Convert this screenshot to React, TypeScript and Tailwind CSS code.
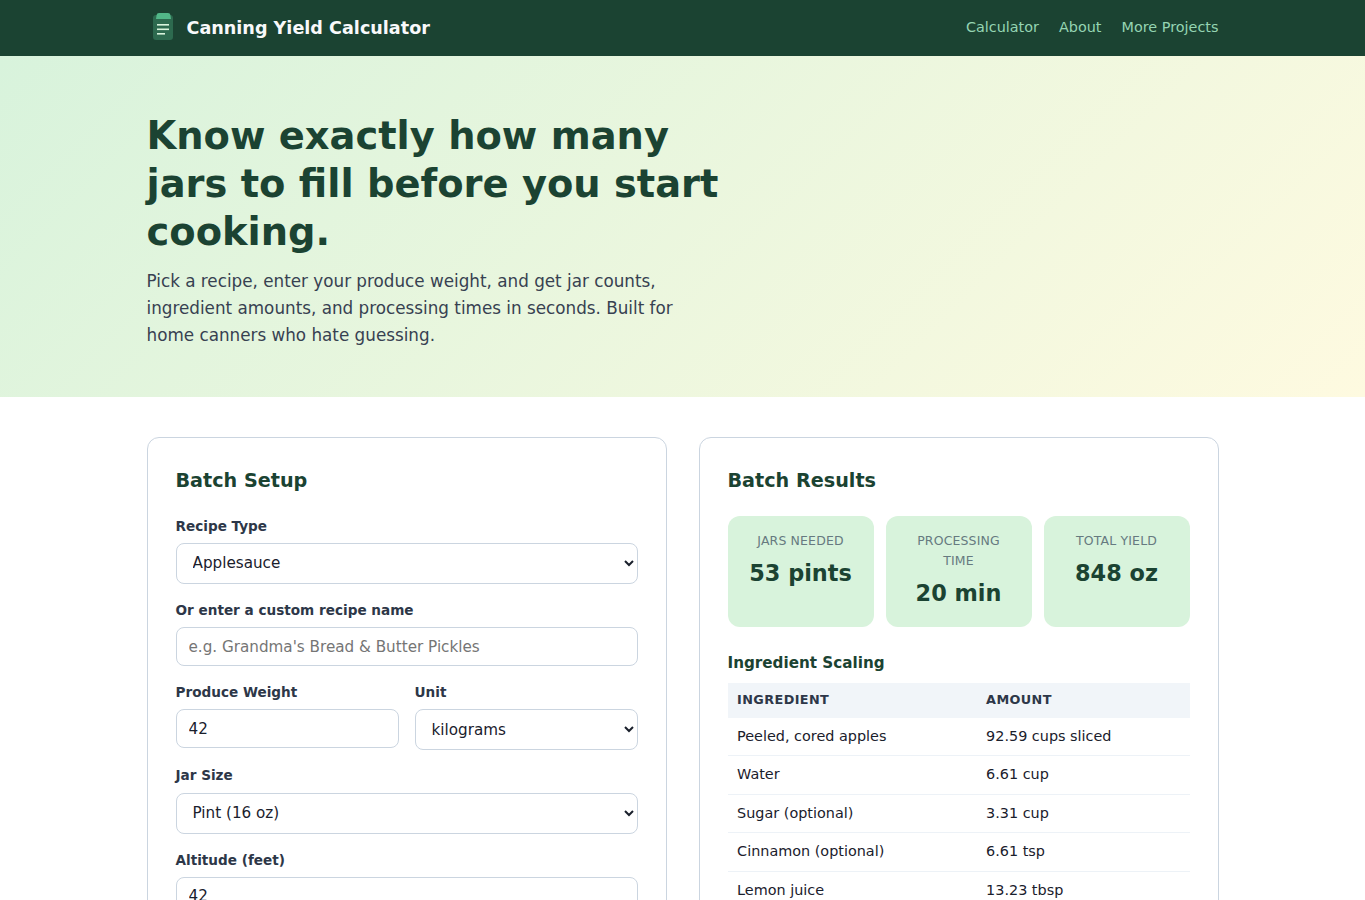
const ingredients = [
  { name: 'Peeled, cored apples', amount: '92.59 cups sliced' },
  { name: 'Water', amount: '6.61 cup' },
  { name: 'Sugar (optional)', amount: '3.31 cup' },
  { name: 'Cinnamon (optional)', amount: '6.61 tsp' },
  { name: 'Lemon juice', amount: '13.23 tbsp' },
];

const stats = [
  { label: 'Jars Needed', value: '53 pints' },
  { label: 'Processing Time', value: '20 min' },
  { label: 'Total Yield', value: '848 oz' },
];

const labelClass = 'block mb-[5.6px] text-[13.6px] font-semibold text-[#2d3748]';
const selectClass = 'w-full py-[9.5px] px-3 border border-[#cbd5e0] rounded-lg bg-white text-[15.2px] leading-normal text-[#1a202c]';
const inputClass = 'w-full py-[9.4px] px-3 border border-[#cbd5e0] rounded-lg bg-white text-[15.2px] leading-[normal] text-[#1a202c] placeholder:text-[#757575]';

function JarIcon() {
  return (
    <svg viewBox="0 0 32 32" width="32" height="32" className="mr-2">
      <rect x="6" y="3" width="20" height="25" rx="3" fill="#2d6a4f" />
      <path d="M9 7 L9.6 3 Q9.8 1 12 1 L21 1 Q23.2 1 23.4 3 L24 7 Z" fill="#52b788" />
      <rect x="10" y="12" width="12" height="1.6" fill="#d8f3dc" />
      <rect x="10" y="16.5" width="12" height="1.6" fill="#d8f3dc" />
      <rect x="10" y="21" width="8" height="1.6" fill="#d8f3dc" />
    </svg>
  );
}

export default function App() {
  return (
    <div className="font-['DejaVu_Sans',sans-serif] leading-[1.6] text-[#1a202c] bg-white">
      {/* Top bar */}
      <nav className="bg-[#1b4332] h-14 flex items-center">
        <div className="w-[1072px] mx-auto flex items-center justify-between">
          <div className="flex items-center">
            <JarIcon />
            <span className="text-[17.6px] font-bold text-[#f8f9fa]">Canning Yield Calculator</span>
          </div>
          <div className="flex items-center gap-5 text-[14.4px] text-[#95d5b2]">
            <a href="#calculator">Calculator</a>
            <a href="#about">About</a>
            <a href="#projects">More Projects</a>
          </div>
        </div>
      </nav>

      {/* Hero */}
      <section className="bg-[linear-gradient(135deg,#d8f3dc_0%,#fefae0_100%)] pt-14 pb-12">
        <div className="w-[1072px] mx-auto">
          <h1 className="max-w-[600px] text-[38.4px] leading-[1.25] font-extrabold text-[#1b4332] mb-3">
            Know exactly how many jars to fill before you start cooking.
          </h1>
          <p className="max-w-[560px] text-[16.8px] text-[#374151]">
            Pick a recipe, enter your produce weight, and get jar counts, ingredient amounts, and processing times in seconds. Built for home canners who hate guessing.
          </p>
        </div>
      </section>

      {/* Calculator */}
      <main className="w-[1072px] mx-auto pt-10 pb-10 grid grid-cols-2 gap-8 items-start">
        <section className="border border-[#cbd5e0] rounded-xl p-7">
          <h2 className="text-[19.2px] font-bold text-[#1b4332] mb-[19.2px]">Batch Setup</h2>

          <div className="mb-4">
            <label className={labelClass}>Recipe Type</label>
            <select className={selectClass} defaultValue="Applesauce">
              <option>Applesauce</option>
              <option>Dill Pickles</option>
              <option>Strawberry Jam</option>
            </select>
          </div>

          <div className="mb-4">
            <label className={labelClass}>Or enter a custom recipe name</label>
            <input className={inputClass} placeholder="e.g. Grandma's Bread & Butter Pickles" />
          </div>

          <div className="mb-[15px] grid grid-cols-2 gap-4 items-start">
            <div>
              <label className={labelClass}>Produce Weight</label>
              <input className={inputClass} type="number" defaultValue="42" />
            </div>
            <div>
              <label className={labelClass}>Unit</label>
              <select className={selectClass} defaultValue="kilograms">
                <option>kilograms</option>
                <option>pounds</option>
              </select>
            </div>
          </div>

          <div className="mb-4">
            <label className={labelClass}>Jar Size</label>
            <select className={selectClass} defaultValue="Pint (16 oz)">
              <option>Pint (16 oz)</option>
              <option>Quart (32 oz)</option>
            </select>
          </div>

          <div className="mb-4">
            <label className={labelClass}>Altitude (feet)</label>
            <input className={inputClass} type="number" defaultValue="42" />
          </div>
        </section>

        <section className="border border-[#cbd5e0] rounded-xl p-7">
          <h2 className="text-[19.2px] font-bold text-[#1b4332] mb-[19.2px]">Batch Results</h2>

          <div className="grid grid-cols-3 gap-3 mb-6">
            {stats.map((s) => (
              <div key={s.label} className="bg-[#d8f3dc] rounded-xl p-[15.2px] text-center">
                <div className="text-[12.48px] tracking-[0.16px] uppercase text-[#667a80] mb-[5px]">{s.label}</div>
                <div className="text-[22.4px] font-bold text-[#1b4332]">{s.value}</div>
              </div>
            ))}
          </div>

          <h3 className="text-[15.2px] font-bold text-[#1b4332] mb-2">Ingredient Scaling</h3>
          <table className="w-full border-collapse text-[14.4px]">
            <thead>
              <tr className="bg-[#f1f5f9]">
                <th className="w-[249px] py-[7.2px] px-[9.6px] text-left text-[12.8px] font-bold uppercase tracking-[0.4px] text-[#2d3748]">Ingredient</th>
                <th className="py-[7.2px] px-[9.6px] text-left text-[12.8px] font-bold uppercase tracking-[0.4px] text-[#2d3748]">Amount</th>
              </tr>
            </thead>
            <tbody>
              {ingredients.map((row) => (
                <tr key={row.name} className="border-b border-[#edf2f7]">
                  <td className="py-[7.2px] px-[9.6px]">{row.name}</td>
                  <td className="py-[7.2px] px-[9.6px]">{row.amount}</td>
                </tr>
              ))}
            </tbody>
          </table>
        </section>
      </main>
    </div>
  );
}
